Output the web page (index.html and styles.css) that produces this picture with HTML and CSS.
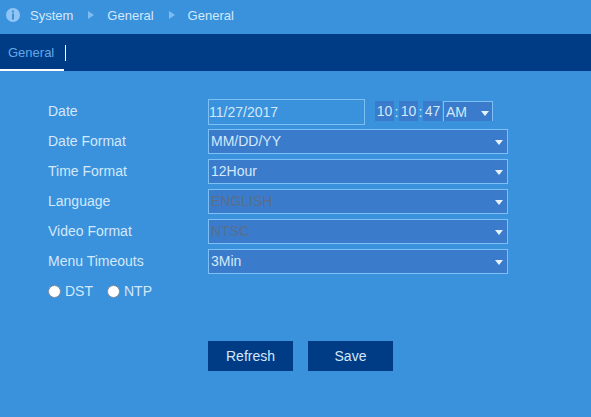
FILE: index.html
```html
<!DOCTYPE html>
<html lang="en">
<head>
    <meta charset="UTF-8">
    <title>General</title>
    <link rel="stylesheet" href="styles.css">
</head>
<body>
    <div class="crumbs">
        <svg class="info-icon" width="14" height="14" viewBox="0 0 14 14">
            <circle cx="7" cy="7" r="7" fill="#8fc4f4"/>
            <rect x="6" y="2.5" width="2" height="2" fill="#3a92dc"/>
            <rect x="6" y="5.5" width="2" height="6" fill="#3a92dc"/>
        </svg>
        <span class="crumb">System</span>
        <span class="crumb-arrow"></span>
        <span class="crumb">General</span>
        <span class="crumb-arrow"></span>
        <span class="crumb">General</span>
    </div>

    <div class="tabs">
        <div class="tab">General</div>
        <div class="tab-sep"></div>
    </div>

    <div class="form">
        <div class="row date-row">
            <div class="label">Date</div>
            <div class="date-input">11/27/2017</div>
            <div class="time">
                <span class="time-box">10</span><span class="colon">:</span>
                <span class="time-box">10</span><span class="colon">:</span>
                <span class="time-box">47</span>
                <div class="ampm">AM<span class="caret"></span></div>
            </div>
        </div>
        <div class="row">
            <div class="label">Date Format</div>
            <div class="select">MM/DD/YY<span class="caret"></span></div>
        </div>
        <div class="row">
            <div class="label">Time Format</div>
            <div class="select">12Hour<span class="caret"></span></div>
        </div>
        <div class="row">
            <div class="label">Language</div>
            <div class="select disabled">ENGLISH<span class="caret"></span></div>
        </div>
        <div class="row">
            <div class="label">Video Format</div>
            <div class="select disabled">NTSC<span class="caret"></span></div>
        </div>
        <div class="row">
            <div class="label">Menu Timeouts</div>
            <div class="select">3Min<span class="caret"></span></div>
        </div>
        <div class="radios">
            <span class="radio"></span><span class="radio-label">DST</span>
            <span class="radio"></span><span class="radio-label">NTP</span>
        </div>
        <div class="buttons">
            <div class="btn">Refresh</div>
            <div class="btn">Save</div>
        </div>
    </div>
</body>
</html>
```

FILE: styles.css
```css
html, body {
    height: 100%;
}

body {
    font-family: "Liberation Sans", Arial, sans-serif;
    font-size: 14px;
    margin: 0;
    background-color: #3a92dc;
    color: #d3e8fb;
    overflow: hidden;
}

.crumbs {
    display: flex;
    align-items: center;
    height: 34px;
    padding: 0 0 4px 6px;
    box-sizing: border-box;
    font-size: 13px;
}

.info-icon {
    margin-right: 10px;
}

.crumb-arrow {
    width: 0;
    height: 0;
    border-left: 6px solid #7dbcf2;
    border-top: 4px solid transparent;
    border-bottom: 4px solid transparent;
    margin: 0 13px 0 15px;
}

.tabs {
    display: flex;
    height: 37px;
    background-color: #003c86;
}

.tab {
    width: 64px;
    height: 37px;
    line-height: 38px;
    padding-left: 8px;
    box-sizing: border-box;
    color: #64a9e6;
    font-size: 13px;
    border-bottom: 2px solid #fff;
}

.tab-sep {
    width: 1px;
    height: 16px;
    margin: 11px 0 0 1px;
    background-color: #fff;
}

.form {
    padding: 28px 0 0 48px;
}

.row {
    display: flex;
    align-items: flex-start;
    height: 30px;
}

.label {
    width: 160px;
    line-height: 25px;
}

.date-input {
    width: 157px;
    height: 26px;
    line-height: 24px;
    box-sizing: border-box;
    border: 1px solid #7cc0f5;
}

.time {
    display: flex;
    align-items: flex-start;
    margin: 2px 0 0 10px;
}

.time-box {
    width: 19px;
    height: 20px;
    line-height: 20px;
    text-align: center;
    background-color: #3a7ccb;
}

.colon {
    width: 5px;
    line-height: 22px;
    text-align: center;
}

.ampm {
    position: relative;
    width: 50px;
    height: 20px;
    line-height: 20px;
    margin-left: 1px;
    padding-left: 2px;
    box-sizing: border-box;
    background-color: #3a7ccb;
    border: 1px solid #7cc0f5;
    border-bottom: none;
}

.select {
    position: relative;
    width: 300px;
    height: 25px;
    line-height: 23px;
    padding-left: 2px;
    box-sizing: border-box;
    background-color: #3a7ccb;
    border: 1px solid #7cc0f5;
}

.select.disabled {
    color: #5b6e8c;
}

.caret {
    position: absolute;
    right: 4px;
    top: 10px;
    width: 0;
    height: 0;
    border-top: 5px solid #e6f2fd;
    border-left: 4px solid transparent;
    border-right: 4px solid transparent;
}

.ampm .caret {
    right: 3px;
    top: 9px;
}

.radios {
    display: flex;
    align-items: center;
    height: 20px;
    margin-top: 2px;
}

.radio {
    width: 13px;
    height: 13px;
    margin-right: 4px;
    border-radius: 50%;
    background-color: #fff;
    border: 1px solid #7a8a9c;
    box-sizing: border-box;
}

.radio-label {
    margin-right: 14px;
}

.buttons {
    display: flex;
    gap: 15px;
    margin: 40px 0 0 160px;
}

.btn {
    width: 85px;
    height: 30px;
    line-height: 30px;
    text-align: center;
    background-color: #003c86;
}
```
